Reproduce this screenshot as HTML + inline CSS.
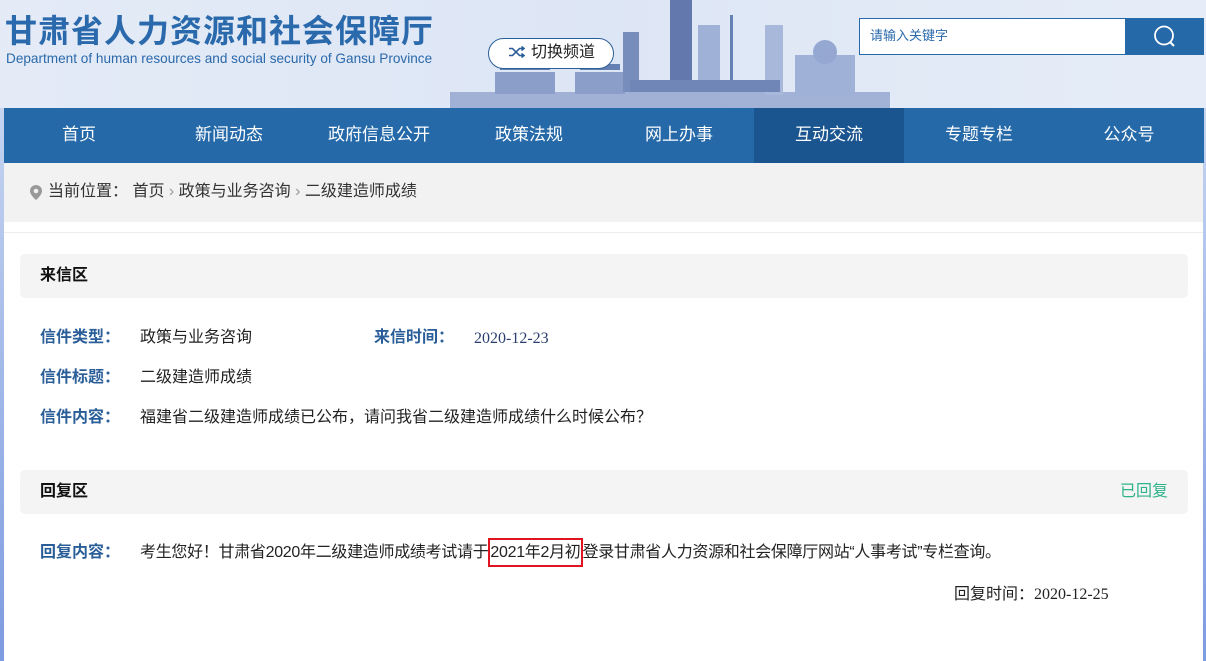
<!DOCTYPE html>
<html><head><meta charset="utf-8"><style>
*{margin:0;padding:0;box-sizing:border-box}
body{width:1206px;height:661px;overflow:hidden;background:#fff;font-family:"Liberation Sans","Noto Sans CJK SC",sans-serif;position:relative}
.lb{position:absolute;left:0;top:108px;width:4px;height:553px;background:linear-gradient(#c5d4f0,#7d9be0)}
.rb{position:absolute;right:0;top:108px;width:3px;height:553px;background:linear-gradient(#c5d4f0,#7d9be0)}
.hd{position:absolute;left:0;top:0;width:1206px;height:108px;background:linear-gradient(90deg,#e4ebf7,#dde6f5 50%,#e6edf8);overflow:hidden}
.t1{position:absolute;left:5px;top:6px;font-size:32px;font-weight:bold;color:#2a69ab;letter-spacing:1px;white-space:nowrap}
.t2{position:absolute;left:6px;top:51px;font-size:13.6px;color:#2a69ab;white-space:nowrap}
.sw{position:absolute;left:488px;top:38px;width:126px;height:31px;border:1.5px solid #2a5e98;border-radius:16px;background:#fff;font-size:16px;color:#222;line-height:28px;padding-left:20px}
.sb{position:absolute;left:859px;top:18px;width:267px;height:37px;border:1.5px solid #2569a8;background:#fff;font-size:13px;color:#2a69ab;line-height:34px;padding-left:10px}
.sbt{position:absolute;left:1125px;top:18px;width:79px;height:37px;background:#2569a8}
.nav{position:absolute;left:4px;top:108px;width:1200px;height:55px;background:#2569a8;display:flex}
.nav div{width:150px;text-align:center;color:#fff;font-size:17px;line-height:53px}
.nav .on{background:#1b5590}
.bc{position:absolute;left:4px;top:163px;width:1199px;height:59px;background:#f2f2f2;font-size:16px;color:#333;line-height:58px;padding-left:44px}
.pin{position:absolute;left:26px;top:22px}
.ln{position:absolute;left:4px;top:232px;width:1199px;height:1px;background:#ececec}
.sec{position:absolute;left:20px;width:1168px;height:44px;background:#f4f4f4;border-radius:5px;font-size:16px;font-weight:bold;color:#111;line-height:44px;padding-left:20px}
.row{position:absolute;font-size:16px;color:#222;white-space:nowrap;line-height:20px}
.lab{color:#2a5e98;font-weight:bold}
.hl{border:2px solid #e0141e;padding:4px 0}
.ser{font-family:'Liberation Serif',serif}
</style></head><body>
<div class="hd">
<svg style="position:absolute;left:440px;top:0" width="460" height="108" viewBox="0 0 460 108">
<g fill="#3e5f9e" opacity="0.75">
<rect x="10" y="92" width="440" height="16" fill="#8da0cc"/>
<rect x="55" y="72" width="60" height="22" fill="#6f86bb"/>
<rect x="60" y="64" width="50" height="6"/>
<rect x="135" y="72" width="50" height="22" fill="#6f86bb"/>
<rect x="140" y="64" width="40" height="6"/>
<rect x="183" y="32" width="16" height="60" fill="#5670aa"/>
<rect x="230" y="0" width="22" height="85" fill="#3a5596"/>
<rect x="258" y="25" width="22" height="60" fill="#8a9fcd"/>
<rect x="290" y="15" width="3" height="70"/>
<rect x="325" y="25" width="18" height="70" fill="#95a8d2"/>
<rect x="355" y="55" width="60" height="40" fill="#8a9fcd"/>
<circle cx="385" cy="52" r="12" fill="#7d93c6"/>
<rect x="190" y="80" width="150" height="12" fill="#4c66a3"/>
</g></svg>
<div class="t1">甘肃省人力资源和社会保障厅</div>
<div class="t2">Department of human resources and social security of Gansu Province</div>
<div class="sw"><svg width="16" height="12" style="vertical-align:-1px;margin-right:6px" viewBox="0 0 16 12"><path d="M0 2.5h3.5l7 7H15M0 9.5h3.5l7-7H15M12.5 0.5l2.5 2-2.5 2M12.5 7.5l2.5 2-2.5 2" stroke="#2a5e98" stroke-width="1.6" fill="none"/></svg>切换频道</div>
<div class="sb">请输入关键字</div>
<div class="sbt"><svg width="79" height="37" viewBox="0 0 79 37"><circle cx="39" cy="17.5" r="9" stroke="#fff" stroke-width="1.8" fill="none"/><path d="M45 24l4 4" stroke="#fff" stroke-width="2"/></svg></div>
</div>
<div class="lb"></div><div class="rb"></div>
<div class="nav"><div>首页</div><div>新闻动态</div><div>政府信息公开</div><div>政策法规</div><div>网上办事</div><div class="on">互动交流</div><div>专题专栏</div><div>公众号</div></div>
<div class="bc"><svg class="pin" width="12" height="15" viewBox="0 0 12 15"><path d="M6 0a6 6 0 0 1 6 6c0 4-6 9-6 9S0 10 0 6a6 6 0 0 1 6-6z" fill="#999"/><circle cx="6" cy="6" r="2.3" fill="#f2f2f2"/></svg>当前位置：&nbsp;首页 <span style="color:#999">›</span> 政策与业务咨询 <span style="color:#999">›</span> 二级建造师成绩</div>
<div class="ln"></div>
<div class="sec" style="top:254px">来信区</div>
<div class="row" style="left:40px;top:328px"><span class="lab">信件类型：</span></div>
<div class="row" style="left:140px;top:328px">政策与业务咨询</div>
<div class="row" style="left:374px;top:328px"><span class="lab">来信时间：</span></div>
<div class="row ser" style="left:474px;top:329px;color:#2a3f6e">2020-12-23</div>
<div class="row" style="left:40px;top:368px"><span class="lab">信件标题：</span></div>
<div class="row" style="left:140px;top:368px">二级建造师成绩</div>
<div class="row" style="left:40px;top:408px"><span class="lab">信件内容：</span></div>
<div class="row" style="left:140px;top:408px">福建省二级建造师成绩已公布，请问我省二级建造师成绩什么时候公布？</div>
<div class="sec" style="top:470px">回复区<span style="position:absolute;right:20px;color:#2fb38a;font-weight:normal">已回复</span></div>
<div class="row" style="left:40px;top:543px"><span class="lab">回复内容：</span></div>
<div class="row" style="left:140px;top:543px;letter-spacing:-0.3px">考生您好！甘肃省2020年二级建造师成绩考试请于<span class="hl">2021年2月初</span>登录甘肃省人力资源和社会保障厅网站“人事考试”专栏查询。</div>
<div class="row" style="left:954px;top:585px">回复时间：<span class="ser">2020-12-25</span></div>
</body></html>
